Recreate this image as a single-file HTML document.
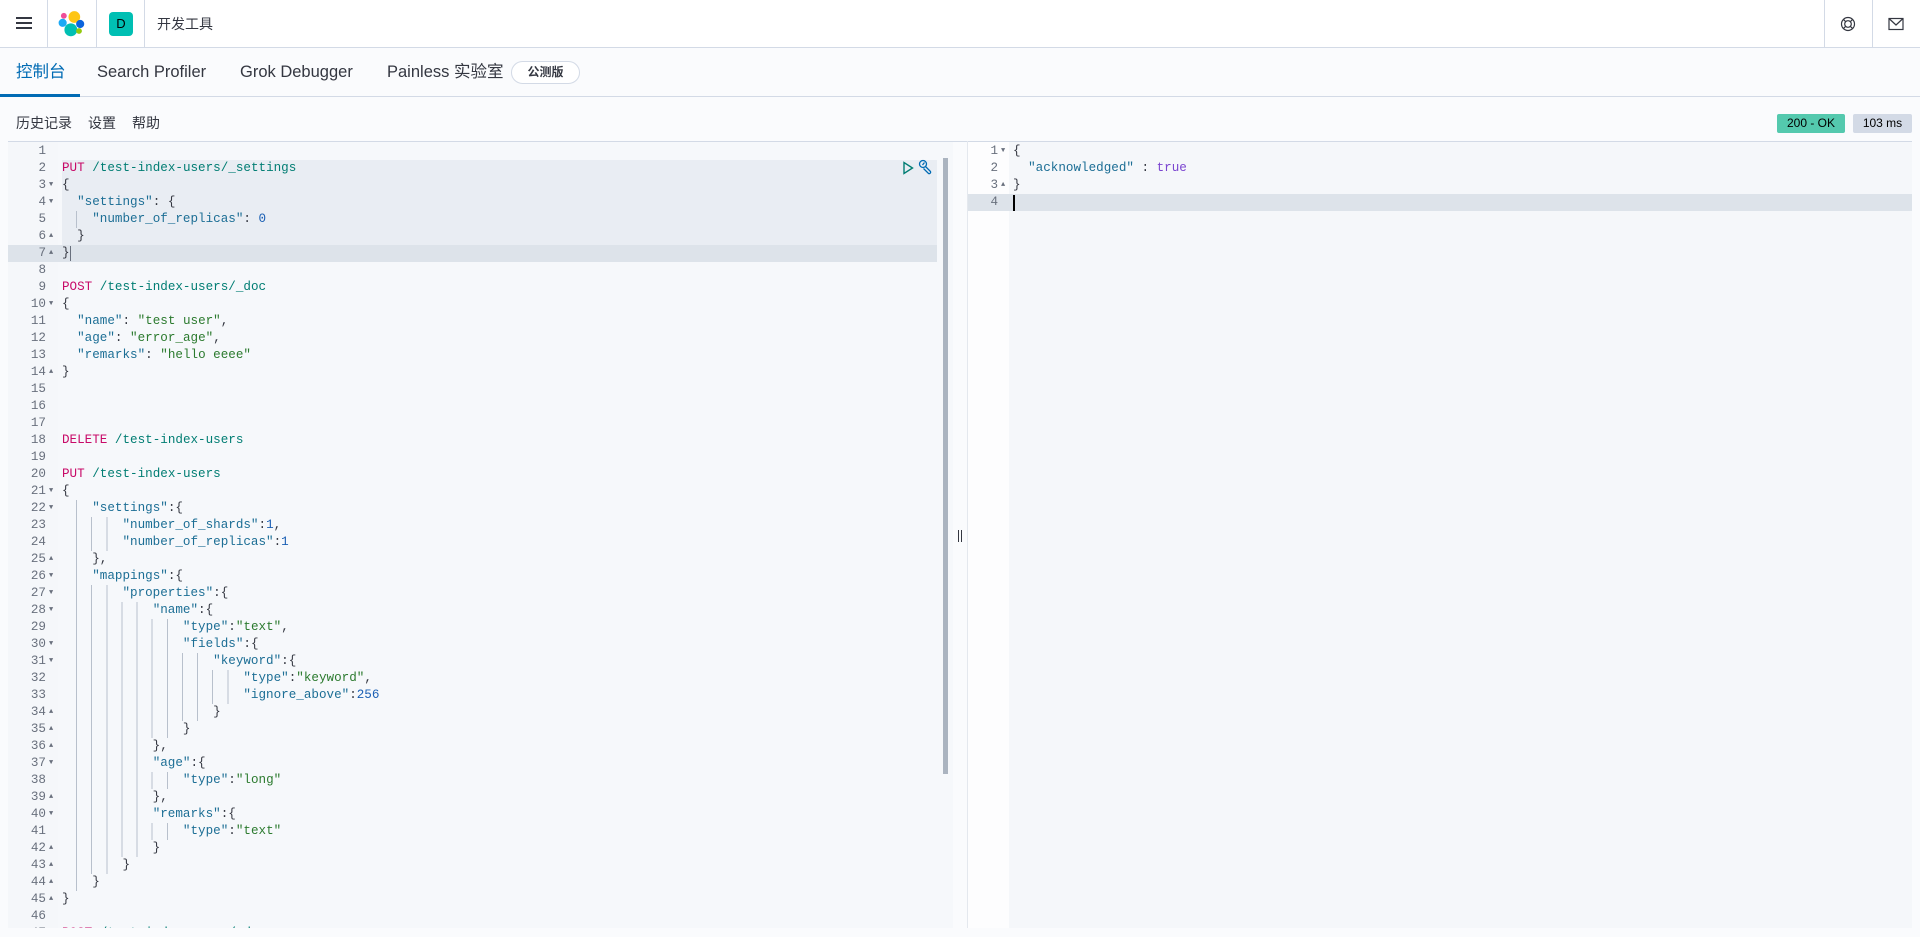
<!DOCTYPE html>
<html><head><meta charset="utf-8">
<style>
*{box-sizing:border-box;margin:0;padding:0}
html,body{width:1920px;height:937px;overflow:hidden;background:#fafbfd;font-family:"Liberation Sans","Noto Sans CJK SC",sans-serif;color:#343741}
.hdr{position:absolute;left:0;top:0;width:1920px;height:48px;background:#fff;border-bottom:1px solid #d3dae6;box-shadow:0 1px 3px rgba(0,0,0,.08)}
.vd{position:absolute;top:0;height:48px;width:1px;background:#d3dae6}
.tabs{position:absolute;left:0;top:48px;width:1920px;height:49px;border-bottom:1px solid #d3dae6;background:#fafbfd}
.tab{position:absolute;top:14px;font-size:16.5px;line-height:20px;color:#343741}
.tb{position:absolute;top:114px;font-size:14px;line-height:18px}
.code{font-family:"Liberation Mono","Noto Sans CJK SC",monospace;font-size:12.6px;line-height:17px;white-space:pre}
.ln{position:absolute;height:17px;line-height:17px}
.num{position:absolute;width:38px;text-align:right;color:#69707d;height:17px;line-height:17px;font-family:"Liberation Mono",monospace;font-size:12.6px}
.fa{position:absolute;font-size:7px;color:#69707d;line-height:17px}
.m{color:#c80a68}.p{color:#017d73}.k{color:#1c6e95}.s{color:#2b7a2e}.n{color:#1a5fb4}.b{color:#343741}.t{color:#7b45d0}
.g{display:inline-block;height:17px;vertical-align:top;background:repeating-linear-gradient(to right,transparent 0,transparent calc(2ch - 1px),#b8c0cc calc(2ch - 1px),#b8c0cc 2ch)}
</style></head><body>
<div class="hdr">
  <div style="position:absolute;left:16px;top:17px;width:16px;height:2px;background:#343741;box-shadow:0 5px 0 #343741,0 10px 0 #343741"></div>
  <div class="vd" style="left:47px"></div>
  <svg style="position:absolute;left:58px;top:10px" width="28" height="28" viewBox="0 0 24 24">
    <circle cx="14" cy="6" r="5" fill="#fec514"/><circle cx="5" cy="5" r="2.5" fill="#f04e98"/>
    <circle cx="4" cy="11" r="3.5" fill="#1ba9f5"/><circle cx="19" cy="12" r="3.5" fill="#0b64dd"/>
    <circle cx="11" cy="17" r="5.5" fill="#00bfb3"/><circle cx="18" cy="18" r="2.5" fill="#93c90e"/>
  </svg>
  <div class="vd" style="left:96px"></div>
  <div style="position:absolute;left:109px;top:12px;width:24px;height:24px;border-radius:4px;background:#00bfb3;color:#000;font-size:13px;line-height:24px;text-align:center">D</div>
  <div class="vd" style="left:144px"></div>
  <div style="position:absolute;left:157px;top:15px;font-size:14px;line-height:18px;color:#343741">开发工具</div>
  <div class="vd" style="left:1824px"></div>
  <svg style="position:absolute;left:1840px;top:16px" width="16" height="16" viewBox="0 0 16 16" fill="none" stroke="#343741" stroke-width="1.2"><circle cx="8" cy="8" r="6.5"/><circle cx="8" cy="8" r="3.3"/><path d="M3.4 3.4l2.3 2.3M12.6 3.4l-2.3 2.3M3.4 12.6l2.3-2.3M12.6 12.6l-2.3-2.3"/></svg>
  <div class="vd" style="left:1872px"></div>
  <svg style="position:absolute;left:1888px;top:17px" width="16" height="14" viewBox="0 0 16 14" fill="none" stroke="#343741" stroke-width="1.2"><rect x="1" y="1.5" width="14" height="11"/><path d="M1 1.5l7 6.5 7-6.5"/></svg>
</div>
<div class="tabs">
  <div class="tab" style="left:16px;color:#006bb4">控制台</div>
  <div style="position:absolute;left:0;top:46px;width:80px;height:3px;background:#006bb4"></div>
  <div class="tab" style="left:97px">Search Profiler</div>
  <div class="tab" style="left:240px">Grok Debugger</div>
  <div class="tab" style="left:387px">Painless 实验室</div>
  <div style="position:absolute;left:511px;top:13px;width:69px;height:23px;border:1px solid #d3dae6;border-radius:12px;background:#fff;font-size:12px;font-weight:bold;line-height:21px;text-align:center">公测版</div>
</div>
<div class="tb" style="left:16px">历史记录</div>
<div class="tb" style="left:88px">设置</div>
<div class="tb" style="left:132px">帮助</div>
<div style="position:absolute;left:1777px;top:114px;width:68px;height:19px;background:#54c9ae;border-radius:2px;font-size:12px;line-height:19px;text-align:center;color:#000">200 - OK</div>
<div style="position:absolute;left:1853px;top:114px;width:59px;height:19px;background:#d3dae6;border-radius:2px;font-size:12px;line-height:19px;text-align:center;color:#000">103 ms</div>

<div style="position:absolute;left:8px;top:141px;width:945px;height:787px;background:#f6f8fb;border-top:1px solid #d3dae6;overflow:hidden" class="code">
  <div style="position:absolute;left:0;top:0;width:50px;height:787px;background:#f5f7fa"></div>
  <div style="position:absolute;left:54px;top:18px;width:875px;height:102px;background:#e9edf3"></div>
  <div style="position:absolute;left:0;top:103px;width:929px;height:17px;background:#dde3ea"></div>
  <div style="position:absolute;left:935px;top:16px;width:5px;height:616px;background:#abb4c0"></div>
  <svg style="position:absolute;left:894px;top:19px" width="12" height="14" viewBox="0 0 12 14" fill="none" stroke="#017d73" stroke-width="1.4"><path d="M2 1.5v11l8.5-5.5z"/></svg>
  <svg style="position:absolute;left:910px;top:17px" width="16" height="17" viewBox="0 0 16 17" fill="none" stroke="#006bb4" stroke-width="1.3"><circle cx="5" cy="5" r="3.5"/><path d="M6.5 3.5L4.5 6M7.5 7.5l5 5a1.5 1.5 0 0 1-2 2l-5-5"/></svg>
  <div style="position:absolute;left:0;top:1px;width:930px">
<div class="num" style="top:0">1</div>
<div class="num" style="top:17px">2</div><div class="ln" style="top:17px;left:54px"><span class="m">PUT</span> <span class="p">/test-index-users/_settings</span></div>
<div class="num" style="top:34px">3</div><span class="fa" style="top:34px;left:41px">▼</span><div class="ln b" style="top:34px;left:54px">{</div>
<div class="num" style="top:51px">4</div><span class="fa" style="top:51px;left:41px">▼</span><div class="ln" style="top:51px;left:54px">  <span class="k">"settings"</span><span class="b">: {</span></div>
<div class="num" style="top:68px">5</div><div class="ln" style="top:68px;left:54px"><span class="g" style="width:3ch"></span> <span class="k">"number_of_replicas"</span><span class="b">: </span><span class="n">0</span></div>
<div class="num" style="top:85px">6</div><span class="fa" style="top:85px;left:41px">▲</span><div class="ln b" style="top:85px;left:54px">  }</div>
<div class="num" style="top:102px">7</div><span class="fa" style="top:102px;left:41px">▲</span><div class="ln b" style="top:102px;left:54px">}<span style="display:inline-block;width:1px;height:15px;background:#69707d;vertical-align:top;margin-top:1px"></span></div>
<div class="num" style="top:119px">8</div>
<div class="num" style="top:136px">9</div><div class="ln" style="top:136px;left:54px"><span class="m">POST</span> <span class="p">/test-index-users/_doc</span></div>
<div class="num" style="top:153px">10</div><span class="fa" style="top:153px;left:41px">▼</span><div class="ln b" style="top:153px;left:54px">{</div>
<div class="num" style="top:170px">11</div><div class="ln" style="top:170px;left:54px">  <span class="k">"name"</span><span class="b">: </span><span class="s">"test user"</span><span class="b">,</span></div>
<div class="num" style="top:187px">12</div><div class="ln" style="top:187px;left:54px">  <span class="k">"age"</span><span class="b">: </span><span class="s">"error_age"</span><span class="b">,</span></div>
<div class="num" style="top:204px">13</div><div class="ln" style="top:204px;left:54px">  <span class="k">"remarks"</span><span class="b">: </span><span class="s">"hello eeee"</span></div>
<div class="num" style="top:221px">14</div><span class="fa" style="top:221px;left:41px">▲</span><div class="ln b" style="top:221px;left:54px">}</div>
<div class="num" style="top:238px">15</div>
<div class="num" style="top:255px">16</div>
<div class="num" style="top:272px">17</div>
<div class="num" style="top:289px">18</div><div class="ln" style="top:289px;left:54px"><span class="m">DELETE</span> <span class="p">/test-index-users</span></div>
<div class="num" style="top:306px">19</div>
<div class="num" style="top:323px">20</div><div class="ln" style="top:323px;left:54px"><span class="m">PUT</span> <span class="p">/test-index-users</span></div>
<div class="num" style="top:340px">21</div><span class="fa" style="top:340px;left:41px">▼</span><div class="ln b" style="top:340px;left:54px">{</div>
<div class="num" style="top:357px">22</div><span class="fa" style="top:357px;left:41px">▼</span><div class="ln" style="top:357px;left:54px"><span class="g" style="width:3ch"></span> <span class="k">"settings"</span><span class="b">:{</span></div>
<div class="num" style="top:374px">23</div><div class="ln" style="top:374px;left:54px"><span class="g" style="width:7ch"></span> <span class="k">"number_of_shards"</span><span class="b">:</span><span class="n">1</span><span class="b">,</span></div>
<div class="num" style="top:391px">24</div><div class="ln" style="top:391px;left:54px"><span class="g" style="width:7ch"></span> <span class="k">"number_of_replicas"</span><span class="b">:</span><span class="n">1</span></div>
<div class="num" style="top:408px">25</div><span class="fa" style="top:408px;left:41px">▲</span><div class="ln b" style="top:408px;left:54px"><span class="g" style="width:3ch"></span> },</div>
<div class="num" style="top:425px">26</div><span class="fa" style="top:425px;left:41px">▼</span><div class="ln" style="top:425px;left:54px"><span class="g" style="width:3ch"></span> <span class="k">"mappings"</span><span class="b">:{</span></div>
<div class="num" style="top:442px">27</div><span class="fa" style="top:442px;left:41px">▼</span><div class="ln" style="top:442px;left:54px"><span class="g" style="width:7ch"></span> <span class="k">"properties"</span><span class="b">:{</span></div>
<div class="num" style="top:459px">28</div><span class="fa" style="top:459px;left:41px">▼</span><div class="ln" style="top:459px;left:54px"><span class="g" style="width:11ch"></span> <span class="k">"name"</span><span class="b">:{</span></div>
<div class="num" style="top:476px">29</div><div class="ln" style="top:476px;left:54px"><span class="g" style="width:15ch"></span> <span class="k">"type"</span><span class="b">:</span><span class="s">"text"</span><span class="b">,</span></div>
<div class="num" style="top:493px">30</div><span class="fa" style="top:493px;left:41px">▼</span><div class="ln" style="top:493px;left:54px"><span class="g" style="width:15ch"></span> <span class="k">"fields"</span><span class="b">:{</span></div>
<div class="num" style="top:510px">31</div><span class="fa" style="top:510px;left:41px">▼</span><div class="ln" style="top:510px;left:54px"><span class="g" style="width:19ch"></span> <span class="k">"keyword"</span><span class="b">:{</span></div>
<div class="num" style="top:527px">32</div><div class="ln" style="top:527px;left:54px"><span class="g" style="width:23ch"></span> <span class="k">"type"</span><span class="b">:</span><span class="s">"keyword"</span><span class="b">,</span></div>
<div class="num" style="top:544px">33</div><div class="ln" style="top:544px;left:54px"><span class="g" style="width:23ch"></span> <span class="k">"ignore_above"</span><span class="b">:</span><span class="n">256</span></div>
<div class="num" style="top:561px">34</div><span class="fa" style="top:561px;left:41px">▲</span><div class="ln b" style="top:561px;left:54px"><span class="g" style="width:19ch"></span> }</div>
<div class="num" style="top:578px">35</div><span class="fa" style="top:578px;left:41px">▲</span><div class="ln b" style="top:578px;left:54px"><span class="g" style="width:15ch"></span> }</div>
<div class="num" style="top:595px">36</div><span class="fa" style="top:595px;left:41px">▲</span><div class="ln b" style="top:595px;left:54px"><span class="g" style="width:11ch"></span> },</div>
<div class="num" style="top:612px">37</div><span class="fa" style="top:612px;left:41px">▼</span><div class="ln" style="top:612px;left:54px"><span class="g" style="width:11ch"></span> <span class="k">"age"</span><span class="b">:{</span></div>
<div class="num" style="top:629px">38</div><div class="ln" style="top:629px;left:54px"><span class="g" style="width:15ch"></span> <span class="k">"type"</span><span class="b">:</span><span class="s">"long"</span></div>
<div class="num" style="top:646px">39</div><span class="fa" style="top:646px;left:41px">▲</span><div class="ln b" style="top:646px;left:54px"><span class="g" style="width:11ch"></span> },</div>
<div class="num" style="top:663px">40</div><span class="fa" style="top:663px;left:41px">▼</span><div class="ln" style="top:663px;left:54px"><span class="g" style="width:11ch"></span> <span class="k">"remarks"</span><span class="b">:{</span></div>
<div class="num" style="top:680px">41</div><div class="ln" style="top:680px;left:54px"><span class="g" style="width:15ch"></span> <span class="k">"type"</span><span class="b">:</span><span class="s">"text"</span></div>
<div class="num" style="top:697px">42</div><span class="fa" style="top:697px;left:41px">▲</span><div class="ln b" style="top:697px;left:54px"><span class="g" style="width:11ch"></span> }</div>
<div class="num" style="top:714px">43</div><span class="fa" style="top:714px;left:41px">▲</span><div class="ln b" style="top:714px;left:54px"><span class="g" style="width:7ch"></span> }</div>
<div class="num" style="top:731px">44</div><span class="fa" style="top:731px;left:41px">▲</span><div class="ln b" style="top:731px;left:54px"><span class="g" style="width:3ch"></span> }</div>
<div class="num" style="top:748px">45</div><span class="fa" style="top:748px;left:41px">▲</span><div class="ln b" style="top:748px;left:54px">}</div>
<div class="num" style="top:765px">46</div>
<div class="num" style="top:782px">47</div><div class="ln" style="top:782px;left:54px"><span class="m">POST</span> <span class="p">/test-index-users/_doc</span></div>
  </div>
</div>
<div style="position:absolute;left:953px;top:141px;width:14px;height:787px;background:#fafbfd;border-top:1px solid #d3dae6"></div>
<div style="position:absolute;left:958px;top:530px;width:1px;height:12px;background:#343741"></div>
<div style="position:absolute;left:961px;top:530px;width:1px;height:12px;background:#343741"></div>
<div style="position:absolute;left:967px;top:141px;width:1px;height:787px;background:#e4e8ee"></div>
<div class="code" style="position:absolute;left:968px;top:141px;width:944px;height:787px;background:#f5f7fa;border-top:1px solid #d3dae6;overflow:hidden">
  <div style="position:absolute;left:0;top:0;width:41px;height:787px;background:#fdfdfe"></div>
  <div style="position:absolute;left:0;top:52px;width:944px;height:17px;background:#dde3ea"></div>
  <div style="position:absolute;left:-8px;top:1px;width:900px">
    <div class="num" style="top:0">1</div><span class="fa" style="top:0;left:41px">▼</span><div class="ln b" style="top:0;left:53px">{</div>
    <div class="num" style="top:17px">2</div><div class="ln" style="top:17px;left:53px">  <span class="k">"acknowledged"</span><span class="b"> : </span><span class="t">true</span></div>
    <div class="num" style="top:34px">3</div><span class="fa" style="top:34px;left:41px">▲</span><div class="ln b" style="top:34px;left:53px">}</div>
    <div class="num" style="top:51px">4</div><div style="position:absolute;left:53px;top:52px;width:2px;height:16px;background:#000"></div>
  </div>
</div>
</body></html>
